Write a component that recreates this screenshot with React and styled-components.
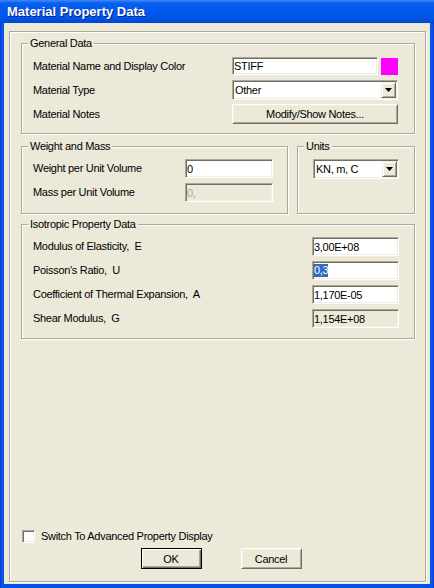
import React from 'react';
import styled, { createGlobalStyle } from 'styled-components';

const GlobalStyle = createGlobalStyle`
  html, body {
    margin: 0;
    padding: 0;
    background: #0055e5;
  }
  body {
    font-family: "Liberation Sans", Arial, sans-serif;
    font-size: 11px;
    letter-spacing: -0.3px;
    color: #000;
  }
`;

const Window = styled.div`
  width: 434px;
  height: 588px;
  display: flex;
  flex-direction: column;
  background: linear-gradient(to right, #0831d9 0, #0a5ae8 2px, #0055e5 4px, #0055e5 430px, #0a5ae8 432px, #0831d9 434px);
  overflow: hidden;
`;

const TitleBar = styled.div`
  flex: none;
  height: 23px;
  display: flex;
  align-items: center;
  padding-left: 7px;
  background: linear-gradient(to bottom, #3d8cf7 0, #0a5fef 3px, #0058ee 10px, #0055e6 18px, #0046d0 23px);
  color: #fff;
  font-family: "Liberation Sans", Arial, sans-serif;
  font-weight: bold;
  font-size: 13px;
  letter-spacing: 0;
  text-shadow: 1px 1px 0 #0a1e8c;
`;

const Client = styled.div`
  flex: 1;
  display: flex;
  margin: 0 4px 4px;
  padding: 8px 5px 2px;
  background: #ece9d8;
`;

const Frame = styled.div`
  flex: 1;
  display: flex;
  flex-direction: column;
  border: 1px solid #aca899;
  box-shadow: 1px 1px 0 #fff, inset 1px 1px 0 #fff;
  padding: 11px 10px 12px 11px;
`;

const Group = styled.div`
  position: relative;
  border: 1px solid #aca899;
  box-shadow: 1px 1px 0 #fff, inset 1px 1px 0 #fff;
  padding: ${p => p.$pad};
  margin-top: ${p => p.$mt || 0}px;
  flex: ${p => p.$flex || 'none'};
  width: ${p => (p.$w ? `${p.$w}px` : 'auto')};
  box-sizing: border-box;
`;

const Caption = styled.span`
  position: absolute;
  top: -7px;
  left: 6px;
  padding: 0 2px;
  line-height: 13px;
  background: #ece9d8;
`;

const SideBySide = styled.div`
  display: flex;
  gap: 9px;
`;

const FieldGrid = styled.div`
  display: grid;
  grid-template-columns: ${p => p.$cols};
  grid-auto-rows: ${p => p.$rowH}px;
  row-gap: ${p => p.$gap}px;
  align-items: center;
`;

const Label = styled.span`
  white-space: pre;
  line-height: 13px;
`;

const textColor = p => (p.$disabled ? '#aca899' : '#000');
const fieldBg = p => (p.$disabled || p.$readOnly ? '#ece9d8' : '#fff');

const TextBox = styled.div`
  box-sizing: border-box;
  width: ${p => p.$w}px;
  height: ${p => p.$h || 19}px;
  display: flex;
  align-items: center;
  padding: 0 1px;
  white-space: nowrap;
  background: ${fieldBg};
  color: ${textColor};
  border: 1px solid;
  border-color: #aca899 #fff #fff #aca899;
  box-shadow: inset 1px 1px 0 #716f64, inset -1px -1px 0 #f1efe2;
`;

const Selected = styled.span`
  background: #316ac5;
  color: #fff;
  line-height: 13px;
`;

const NameRow = styled.div`
  display: flex;
  align-items: center;
  gap: 3px;
`;

const Swatch = styled.div`
  width: 17px;
  height: 17px;
  background: ${p => p.$color};
`;

const Combo = styled.div`
  box-sizing: border-box;
  width: ${p => p.$w}px;
  height: 20px;
  display: flex;
  align-items: center;
  justify-content: space-between;
  padding: 0 1px 0 2px;
  background: #fff;
  border: 1px solid;
  border-color: #aca899 #fff #fff #aca899;
  box-shadow: inset 1px 1px 0 #716f64, inset -1px -1px 0 #f1efe2;
`;

const DropButton = styled.span`
  box-sizing: border-box;
  width: 15px;
  height: 16px;
  display: flex;
  align-items: center;
  justify-content: center;
  background: #ece9d8;
  border: 1px solid;
  border-color: #f1efe2 #716f64 #716f64 #f1efe2;
  box-shadow: inset 1px 1px 0 #fff, inset -1px -1px 0 #aca899;
`;

const PushButton = styled.button`
  box-sizing: border-box;
  width: ${p => p.$w}px;
  height: ${p => p.$h || 20}px;
  padding: 0;
  font-family: "Liberation Sans", Arial, sans-serif;
  font-size: 11px;
  letter-spacing: -0.3px;
  color: #000;
  background: #ece9d8;
  border: 1px solid;
  border-color: ${p => (p.$default ? '#000' : '#fff #716f64 #716f64 #fff')};
  box-shadow: ${p =>
    p.$default
      ? 'inset 1px 1px 0 #fff, inset -1px -1px 0 #716f64, inset -2px -2px 0 #aca899'
      : 'inset 1px 1px 0 #f1efe2, inset -1px -1px 0 #aca899'};
`;

const Spacer = styled.div`
  flex: 1;
`;

const CheckRow = styled.label`
  display: flex;
  align-items: center;
  gap: 6px;
  padding-left: 1px;
  line-height: 13px;
`;

const CheckBox = styled.span`
  box-sizing: border-box;
  width: 13px;
  height: 13px;
  background: #fff;
  border: 1px solid;
  border-color: #aca899 #fff #fff #aca899;
  box-shadow: inset 1px 1px 0 #716f64, inset -1px -1px 0 #f1efe2;
`;

const ButtonRow = styled.div`
  display: flex;
  justify-content: center;
  gap: 39px;
  margin-top: 5px;
  padding-left: 6px;
`;

const Arrow = () => (
  <svg width="7" height="4" viewBox="0 0 7 4">
    <path d="M0 0h7L3.5 4z" fill="#000" />
  </svg>
);

const ComboBox = ({ w, value }) => (
  <Combo $w={w}>
    <span>{value}</span>
    <DropButton><Arrow /></DropButton>
  </Combo>
);

const weightRows = [
  { label: 'Weight per Unit Volume', value: '0' },
  { label: 'Mass per Unit Volume', value: '0,', disabled: true },
];

const isoRows = [
  { label: 'Modulus of Elasticity,  E', value: '3,00E+08' },
  { label: "Poisson's Ratio,  U", value: <Selected>0,3</Selected> },
  { label: 'Coefficient of Thermal Expansion,  A', value: '1,170E-05' },
  { label: 'Shear Modulus,  G', value: '1,154E+08', readOnly: true },
];

export default function App() {
  return (
    <>
      <GlobalStyle />
      <Window>
        <TitleBar>Material Property Data</TitleBar>
        <Client>
          <Frame>
            <Group $pad="12px 15px 9px 11px">
              <Caption>General Data</Caption>
              <FieldGrid $cols="199px 166px" $rowH={20} $gap={4}>
                <Label>Material Name and Display Color</Label>
                <NameRow>
                  <TextBox $w={146} $h={18}>STIFF</TextBox>
                  <Swatch $color="#ff00ff" />
                </NameRow>
                <Label>Material Type</Label>
                <ComboBox w={166} value="Other" />
                <Label>Material Notes</Label>
                <PushButton $w={166}>Modify/Show Notes...</PushButton>
              </FieldGrid>
            </Group>

            <SideBySide>
              <Group $mt={12} $flex="1" $pad="12px 11px 11px 11px">
                <Caption>Weight and Mass</Caption>
                <FieldGrid $cols="152px 88px" $rowH={19} $gap={5}>
                  {weightRows.map(r => (
                    <React.Fragment key={r.label}>
                      <Label>{r.label}</Label>
                      <TextBox $w={88} $disabled={r.disabled}>{r.value}</TextBox>
                    </React.Fragment>
                  ))}
                </FieldGrid>
              </Group>
              <Group $mt={12} $w={118} $pad="12px 15px 11px 15px">
                <Caption>Units</Caption>
                <ComboBox w={86} value="KN, m, C" />
              </Group>
            </SideBySide>

            <Group $mt={10} $pad="12px 15px 10px 11px">
              <Caption>Isotropic Property Data</Caption>
              <FieldGrid $cols="279px 87px" $rowH={19} $gap={5}>
                {isoRows.map(r => (
                  <React.Fragment key={r.label}>
                    <Label>{r.label}</Label>
                    <TextBox $w={87} $readOnly={r.readOnly}>{r.value}</TextBox>
                  </React.Fragment>
                ))}
              </FieldGrid>
            </Group>

            <Spacer />

            <CheckRow>
              <CheckBox />
              <span>Switch To Advanced Property Display</span>
            </CheckRow>

            <ButtonRow>
              <PushButton $w={61} $h={21} $default>OK</PushButton>
              <PushButton $w={61} $h={21}>Cancel</PushButton>
            </ButtonRow>
          </Frame>
        </Client>
      </Window>
    </>
  );
}
